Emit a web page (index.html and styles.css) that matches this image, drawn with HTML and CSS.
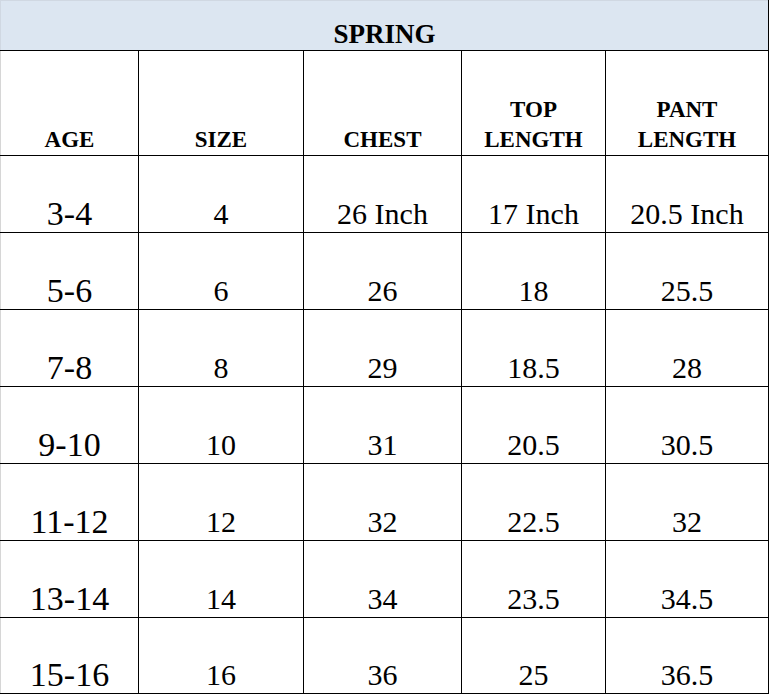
FILE: index.html
```html
<!DOCTYPE html>
<html>
<head>
<meta charset="utf-8">
<link rel="stylesheet" href="styles.css">
</head>
<body>
<table class="sheet">
  <colgroup>
    <col class="c1"><col class="c2"><col class="c3"><col class="c4"><col class="c5">
  </colgroup>
  <tr class="title-row"><td colspan="5" class="title">SPRING</td></tr>
  <tr class="head-row">
    <td class="head first">AGE</td>
    <td class="head">SIZE</td>
    <td class="head">CHEST</td>
    <td class="head">TOP<br>LENGTH</td>
    <td class="head">PANT<br>LENGTH</td>
  </tr>
  <tr class="row"><td class="age first">3-4</td><td class="val">4</td><td class="val">26 Inch</td><td class="val">17 Inch</td><td class="val">20.5 Inch</td></tr>
  <tr class="row"><td class="age first">5-6</td><td class="val">6</td><td class="val">26</td><td class="val">18</td><td class="val">25.5</td></tr>
  <tr class="row"><td class="age first">7-8</td><td class="val">8</td><td class="val">29</td><td class="val">18.5</td><td class="val">28</td></tr>
  <tr class="row"><td class="age first">9-10</td><td class="val">10</td><td class="val">31</td><td class="val">20.5</td><td class="val">30.5</td></tr>
  <tr class="row"><td class="age first">11-12</td><td class="val">12</td><td class="val">32</td><td class="val">22.5</td><td class="val">32</td></tr>
  <tr class="row"><td class="age first">13-14</td><td class="val">14</td><td class="val">34</td><td class="val">23.5</td><td class="val">34.5</td></tr>
  <tr class="row last"><td class="age first">15-16</td><td class="val">16</td><td class="val">36</td><td class="val">25</td><td class="val">36.5</td></tr>
</table>
</body>
</html>
```
FILE: styles.css
```css
html, body {
  margin: 0;
  padding: 0;
  background: #ffffff;
}
.sheet {
  border-collapse: collapse;
  table-layout: fixed;
  width: 768px;
  font-family: "Liberation Serif", "Times New Roman", serif;
  color: #000;
}
.c1 { width: 138px; }
.c2 { width: 165px; }
.c3 { width: 158px; }
.c4 { width: 144px; }
.c5 { width: 163px; }
td {
  border: 1px solid #000;
  padding: 0;
  text-align: center;
  vertical-align: bottom;
}
td.first {
  border-left: 1px solid #d6d6d6;
}
.title-row td {
  height: 49px;
  background: #dce6f1;
  border-top: 1px solid #d0d8e2;
  border-left: 1px solid #d0d8e2;
  font-weight: bold;
  font-size: 27px;
  line-height: 31px;
  padding-bottom: 0;
}
.head-row td {
  height: 104px;
  font-weight: bold;
  font-size: 23px;
  line-height: 30px;
  padding-bottom: 0;
}
.row td {
  height: 75px;
  font-size: 30px;
  line-height: 34px;
  padding-bottom: 1px;
}
.row td.age {
  font-size: 34px;
}
.row.last td {
  height: 74px;
}
```
